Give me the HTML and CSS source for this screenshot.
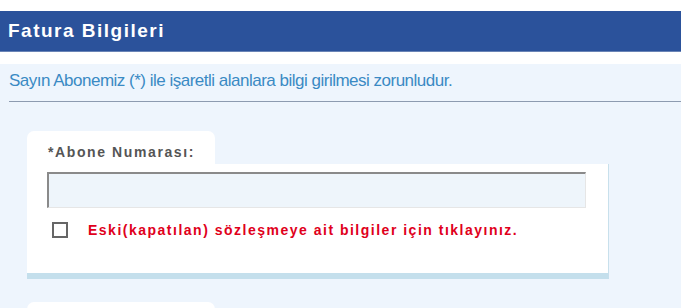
FILE: index.html
```html
<!DOCTYPE html>
<html lang="tr">
<head>
<meta charset="utf-8">
<title>Fatura Bilgileri</title>
<link rel="stylesheet" href="styles.css">
</head>
<body>
<div class="header"><h1 class="header-title">Fatura Bilgileri</h1></div>
<div class="content">
  <p class="notice">Sayın Abonemiz (*) ile işaretli alanlara bilgi girilmesi zorunludur.</p>
  <div class="card">
    <div class="tab">*Abone Numarası:</div>
    <div class="card-body">
      <input class="field" type="text">
      <label class="check-row">
        <span class="checkbox"></span>
        <span class="check-text">Eski(kapatılan) sözleşmeye ait bilgiler için tıklayınız.</span>
      </label>
    </div>
  </div>
  <div class="card">
    <div class="tab"></div>
  </div>
</div>
</body>
</html>
```
FILE: styles.css
```css
html, body {
  margin: 0;
  padding: 0;
  background: #ffffff;
  font-family: "Liberation Sans", Arial, sans-serif;
}
.header {
  margin-top: 11px;
  height: 40px;
  background: #2b529b;
  border-bottom: 1px solid #6a84b6;
  display: flex;
  align-items: center;
  padding-left: 8px;
}
.header-title {
  margin: 0;
  color: #ffffff;
  font-size: 19px;
  font-weight: bold;
  letter-spacing: 1.5px;
}
.content {
  margin-top: 12px;
  background: #eef5fd;
  padding-top: 1px;
  padding-bottom: 20px;
  overflow: hidden;
}
.notice {
  margin: 0 0 0 9px;
  padding: 6px 0 10px 0;
  color: #3a8ac4;
  font-size: 17px;
  letter-spacing: -0.5px;
  border-bottom: 1px solid #8d9bb0;
}
.card {
  margin-left: 27px;
  margin-top: 29px;
  width: 582px;
}
.card + .card {
  margin-top: 23px;
}
.tab {
  width: 167px;
  height: 33px;
  padding-left: 21px;
  background: #ffffff;
  border-radius: 7px 7px 0 0;
  color: #555555;
  font-size: 14px;
  font-weight: bold;
  letter-spacing: 1.6px;
  line-height: 43px;
}
.card-body {
  background: #ffffff;
  border-right: 1px solid #c8e0ec;
  border-bottom: 6px solid #c4dfec;
  padding: 8px 0 35px 20px;
}
.field {
  display: block;
  box-sizing: border-box;
  width: 539px;
  height: 36px;
  margin: 0;
  background: #eef5fb;
  border-style: solid;
  border-width: 2px 1px 1px 2px;
  border-color: #8a8a8a #e6e6e6 #e6e6e6 #8a8a8a;
}
.check-row {
  display: flex;
  align-items: center;
  margin-top: 14px;
  margin-left: 5px;
}
.checkbox {
  box-sizing: border-box;
  width: 16px;
  height: 16px;
  border: 2px solid #666666;
  background: #ffffff;
}
.check-text {
  margin-left: 20px;
  color: #e0001b;
  font-size: 14px;
  font-weight: bold;
  letter-spacing: 1.5px;
}
```
